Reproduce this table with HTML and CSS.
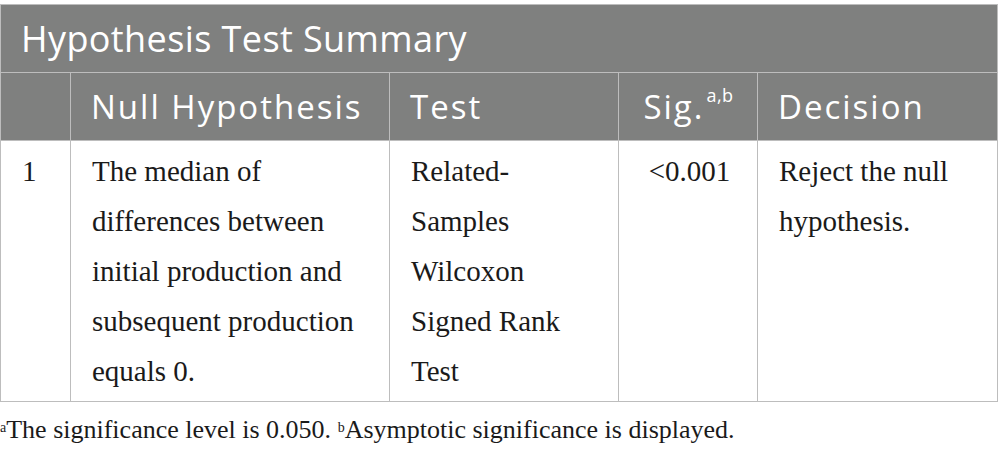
FILE: index.html
```html
<!DOCTYPE html>
<html>
<head>
<meta charset="utf-8">
<link rel="stylesheet" href="styles.css">
</head>
<body>
<div class="wrap">
<table class="summary">
  <colgroup>
    <col class="c1"><col class="c2"><col class="c3"><col class="c4"><col class="c5">
  </colgroup>
  <thead>
    <tr class="title-row"><th colspan="5">Hypothesis Test Summary</th></tr>
    <tr class="head-row">
      <th></th>
      <th>Null Hypothesis</th>
      <th>Test</th>
      <th class="center">Sig.<sup>a,b</sup></th>
      <th>Decision</th>
    </tr>
  </thead>
  <tbody>
    <tr class="body-row">
      <td>1</td>
      <td>The median of differences between initial production and subsequent production equals 0.</td>
      <td>Related-<br>Samples<br>Wilcoxon<br>Signed Rank<br>Test</td>
      <td class="center">&lt;0.001</td>
      <td>Reject the null hypothesis.</td>
    </tr>
  </tbody>
</table>
<p class="note"><sup>a</sup>The significance level is 0.050. <sup>b</sup>Asymptotic significance is displayed.</p>
</div>
</body>
</html>
```
FILE: styles.css
```css
html, body { margin: 0; padding: 0; background: #fff; }
.wrap { padding-top: 4px; width: 998px; }
.summary {
  border-collapse: collapse;
  width: 997px;
  table-layout: fixed;
}
.c1 { width: 70px; }
.c2 { width: 319px; }
.c3 { width: 229px; }
.c4 { width: 139px; }
.c5 { width: 240px; }
.summary th, .summary td {
  border: 1px solid #bdbdbd;
  text-align: left;
  vertical-align: top;
}
.summary thead th {
  background: #7f807f;
  color: #fff;
  font-family: "Open Sans", sans-serif;
  font-weight: 400;
  padding: 0 19px 0 20px;
  vertical-align: middle;
}
.title-row th {
  height: 67px;
  font-size: 36px;
  letter-spacing: 0.4px;
  padding-left: 21px;
}
.head-row th {
  height: 67px;
  font-size: 33px;
  letter-spacing: 2px;
}
.summary .center { text-align: center; }
.head-row sup {
  font-size: 18px;
  letter-spacing: 0.5px;
  vertical-align: top;
  position: relative;
  top: -1px;
  margin-left: 2px;
}
.summary td {
  font-family: "Liberation Serif", serif;
  font-size: 29px;
  line-height: 50px;
  color: #1a1a1a;
  padding: 5px 18px 5px 21px;
  height: 250px;
}
.note {
  margin: 10px 0 0 0;
  font-family: "Liberation Serif", serif;
  font-size: 26px;
  color: #1a1a1a;
  line-height: 36px;
}
.note sup { font-size: 14px; vertical-align: top; position: relative; top: -2px; }
```
